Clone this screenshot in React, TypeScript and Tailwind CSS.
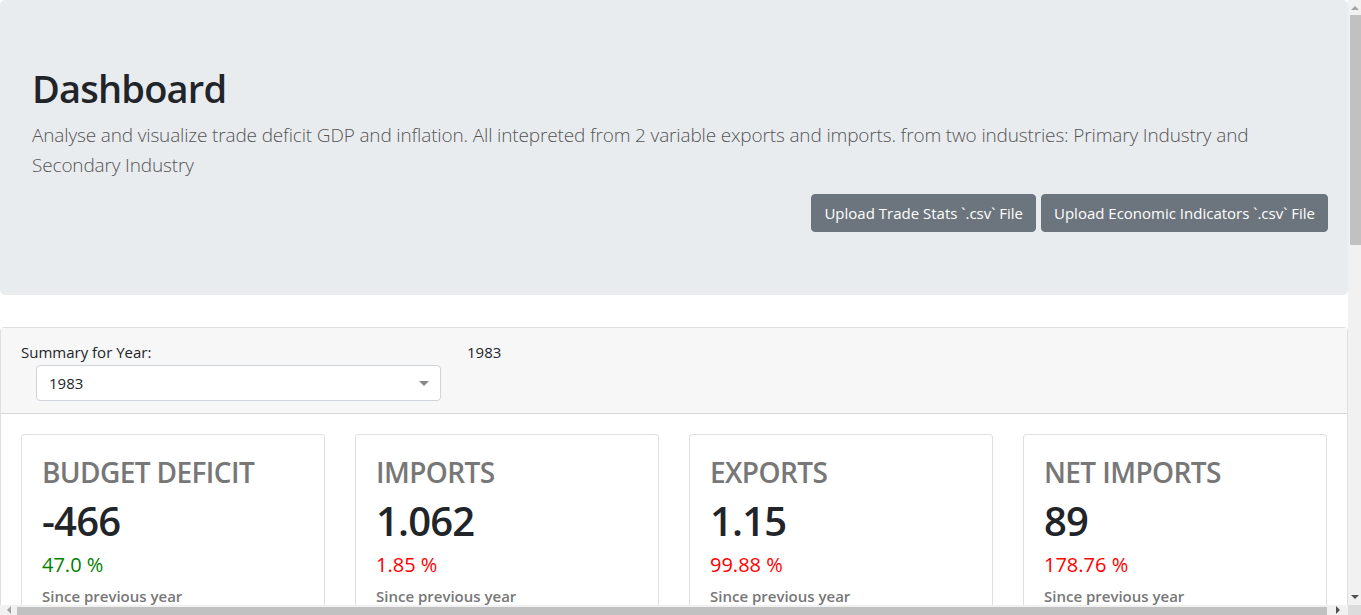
import React from "react";

type Stat = {
  title: string;
  value: string;
  change: string;
  good: boolean;
};

const stats: Stat[] = [
  { title: "BUDGET DEFICIT", value: "-466", change: "47.0 %", good: true },
  { title: "IMPORTS", value: "1.062", change: "1.85 %", good: false },
  { title: "EXPORTS", value: "1.15", change: "99.88 %", good: false },
  { title: "NET IMPORTS", value: "89", change: "178.76 %", good: false },
];

function StatCard({ stat }: { stat: Stat }) {
  return (
    <div className="rounded-[4px] border border-black/[.125] bg-white p-5">
      <h3 className="mb-2 text-[28px] font-semibold leading-[34px] tracking-[-0.6px] text-[#777]">
        {stat.title}
      </h3>
      <h1 className="mb-2 text-[40px] font-semibold leading-[48px] tracking-[-0.8px] text-[#212529]">
        {stat.value}
      </h1>
      <h5
        className={`mb-2 text-[20px] leading-[24px] ${
          stat.good ? "text-[#008000]" : "text-[#ff0000]"
        }`}
      >
        {stat.change}
      </h5>
      <p className="text-[15px] font-semibold leading-[22px] text-[#777]">Since previous year</p>
    </div>
  );
}

function VerticalScrollbar() {
  return (
    <div className="flex w-[13px] shrink-0 flex-col bg-[#f1f1f1]">
      <div className="flex h-[15px] items-center justify-center">
        <span className="h-0 w-0 border-x-[4px] border-b-[4px] border-x-transparent border-b-[#a3a3a3]" />
      </div>
      <div className="ml-[2px] h-[230px] bg-[#c1c1c1]" />
      <div className="flex-1" />
      <div className="flex h-[17px] items-center justify-center">
        <span className="h-0 w-0 border-x-[4px] border-t-[4px] border-x-transparent border-t-[#505050]" />
      </div>
    </div>
  );
}

function HorizontalScrollbar() {
  return (
    <div className="flex h-[10px] shrink-0 bg-[#f1f1f1]">
      <div className="flex w-[17px] items-end justify-center pb-[1px]">
        <span className="h-0 w-0 border-y-[4px] border-r-[4px] border-y-transparent border-r-[#a3a3a3]" />
      </div>
      <div className="mt-[2px] w-[1310px] bg-[#c1c1c1]" />
      <div className="flex flex-1 items-end justify-center pb-[1px]">
        <span className="h-0 w-0 border-y-[4px] border-l-[4px] border-y-transparent border-l-[#505050]" />
      </div>
      <div className="w-[13px] bg-[#dcdcdc]" />
    </div>
  );
}

export default function App() {
  return (
    <div className="flex h-[615px] w-[1361px] flex-col overflow-hidden bg-white font-['Open_Sans','Noto_Sans',sans-serif] text-[#212529]">
      <div className="flex min-h-0 flex-1">
        <main className="min-w-0 flex-1 overflow-hidden">
          <section className="mb-8 rounded-[5px] bg-[#e9ecef] px-8 pb-[63px] pt-16">
            <h1 className="mb-2 text-[38px] font-semibold leading-[48px] tracking-[-0.8px]">
              Dashboard
            </h1>
            <p className="mb-[14px] text-[19px] font-light leading-[30px] tracking-[-0.15px] text-[#555]">
              Analyse and visualize trade deficit GDP and inflation. All intepreted from 2 variable
              exports and imports. from two industries: Primary Industry and Secondary Industry
            </p>
            <div className="-mr-3 flex justify-end gap-[5px]">
              <button className="rounded-[4px] border border-[#6c757d] bg-[#6c757d] px-3 py-1.5 text-[15px] leading-6 text-white">
                Upload Trade Stats `.csv` File
              </button>
              <button className="rounded-[4px] border border-[#6c757d] bg-[#6c757d] px-3 py-1.5 text-[15px] leading-6 text-white">
                Upload Economic Indicators `.csv` File
              </button>
            </div>
          </section>

          <div className="rounded-[4px] border border-black/[.125]">
            <div className="flex border-b border-black/[.125] bg-[#f7f7f7] px-5 py-3 text-[15px] leading-6">
              <div className="w-[446px]">
                <label>Summary for Year:</label>
                <div className="pl-[15px]">
                  <div className="mt-px flex h-[36px] w-[405px] items-center justify-between rounded-[4px] border border-[#ced4da] bg-white pl-3 pr-[11px]">
                    <span>1983</span>
                    <span className="h-0 w-0 border-x-[5px] border-t-[5px] border-x-transparent border-t-[#888]" />
                  </div>
                </div>
              </div>
              <div>1983</div>
            </div>
            <div className="grid grid-cols-4 gap-[30px] p-5">
              {stats.map((s) => (
                <StatCard key={s.title} stat={s} />
              ))}
            </div>
          </div>
        </main>
        <VerticalScrollbar />
      </div>
      <HorizontalScrollbar />
    </div>
  );
}
